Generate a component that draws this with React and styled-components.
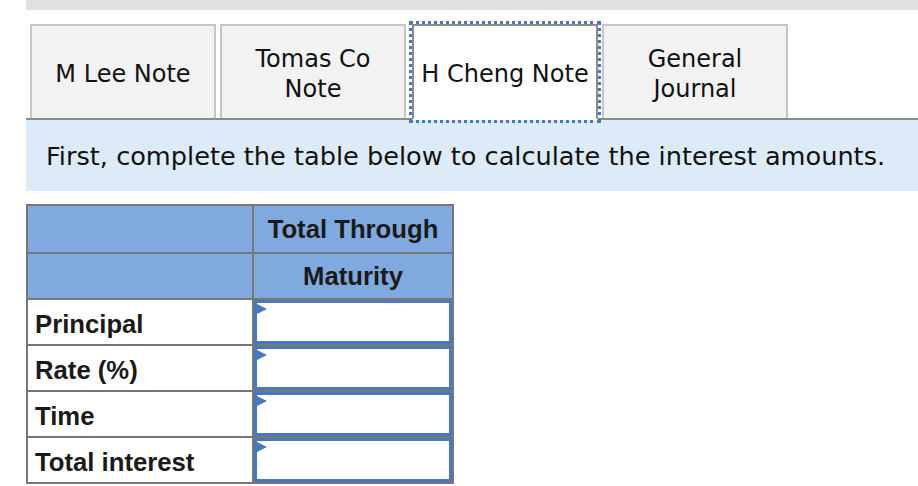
import React from "react";
import styled, { createGlobalStyle } from "styled-components";

const Global = createGlobalStyle`
  html, body { margin: 0; padding: 0; background: #fff; }
  body { font-family: "DejaVu Sans", Verdana, sans-serif; color: #111; }
`;

const Page = styled.div`
  margin-left: 26px;
  width: 892px;
`;

const TopBar = styled.div`
  height: 10px;
  background: #e0e0e0;
`;

const TabStrip = styled.div`
  display: flex;
  gap: 4px;
  padding: 14px 0 0 4px;
  border-bottom: 2px solid #8c8c8c;
`;

const Tab = styled.button`
  box-sizing: border-box;
  width: 186px;
  margin: 0 0 -2px 0;
  padding: 3px 4px 0;
  display: flex;
  align-items: center;
  justify-content: center;
  text-align: center;
  font-family: "DejaVu Sans", Verdana, sans-serif;
  font-size: 24px;
  line-height: 30px;
  color: #111;
  background: ${(p) => (p.$active ? "#fff" : "#f2f2f2")};
  border: 2px solid ${(p) => (p.$active ? "#8a8a8a" : "#c6c6c6")};
  border-bottom: ${(p) => (p.$active ? "2px solid #fff" : "none")};
  outline: ${(p) => (p.$active ? "3px dotted #4a78c0" : "none")};
  outline-offset: 0;
  position: relative;
  z-index: ${(p) => (p.$active ? 1 : 0)};
  height: ${(p) => (p.$active ? "96px" : "94px")};
  margin-left: ${(p) => (p.$active ? "2px" : "0")};
  cursor: pointer;
`;

const Instruction = styled.div`
  background: #ddebf8;
  height: 71px;
  display: flex;
  align-items: center;
  padding-left: 20px;
  font-size: 25.6px;
  color: #111;
  white-space: nowrap;
`;

const Table = styled.table`
  margin-top: 13px;
  border-collapse: collapse;
  border: 2px solid #777;
  font-family: "Liberation Sans", Arial, sans-serif;
  font-weight: bold;
  font-size: 25.7px;
  color: #1a1a1a;
`;

const HeadCell = styled.th`
  background: #80aadf;
  border: 2px solid #777;
  height: ${(p) => p.$h}px;
  padding: 0;
  text-align: center;
  font-weight: bold;
  width: ${(p) => p.$w}px;
`;

const LabelCell = styled.td`
  box-sizing: border-box;
  border: 2px solid #777;
  padding: 4px 0 0 7px;
  width: 224px;
  vertical-align: middle;
  white-space: nowrap;
`;

const InputCell = styled.td`
  border: 2px solid #777;
  padding: 0;
  width: 198px;
`;

const Field = styled.div`
  box-sizing: border-box;
  height: 44px;
  border: 3px solid #4a78b9;
  background: #fff;
  position: relative;
`;

const Marker = styled.span`
  position: absolute;
  left: -2px;
  top: 0;
  width: 0;
  height: 0;
  border-top: 6.5px solid transparent;
  border-bottom: 6.5px solid transparent;
  border-left: 12px solid #4a78b9;
`;

const rows = ["Principal", "Rate (%)", "Time", "Total interest"];

export default function App() {
  return (
    <>
      <Global />
      <Page>
        <TopBar />
        <TabStrip>
          <Tab>M Lee Note</Tab>
          <Tab>Tomas Co<br />Note</Tab>
          <Tab $active>H Cheng Note</Tab>
          <Tab>General<br />Journal</Tab>
        </TabStrip>
        <Instruction>First, complete the table below to calculate the interest amounts.</Instruction>
        <Table>
          <thead>
            <tr>
              <HeadCell $w={224} $h={46} />
              <HeadCell $w={198} $h={46}>Total Through</HeadCell>
            </tr>
            <tr>
              <HeadCell $w={224} $h={44} />
              <HeadCell $w={198} $h={44}>Maturity</HeadCell>
            </tr>
          </thead>
          <tbody>
            {rows.map((r) => (
              <tr key={r}>
                <LabelCell>{r}</LabelCell>
                <InputCell>
                  <Field>
                    <Marker />
                  </Field>
                </InputCell>
              </tr>
            ))}
          </tbody>
        </Table>
      </Page>
    </>
  );
}
